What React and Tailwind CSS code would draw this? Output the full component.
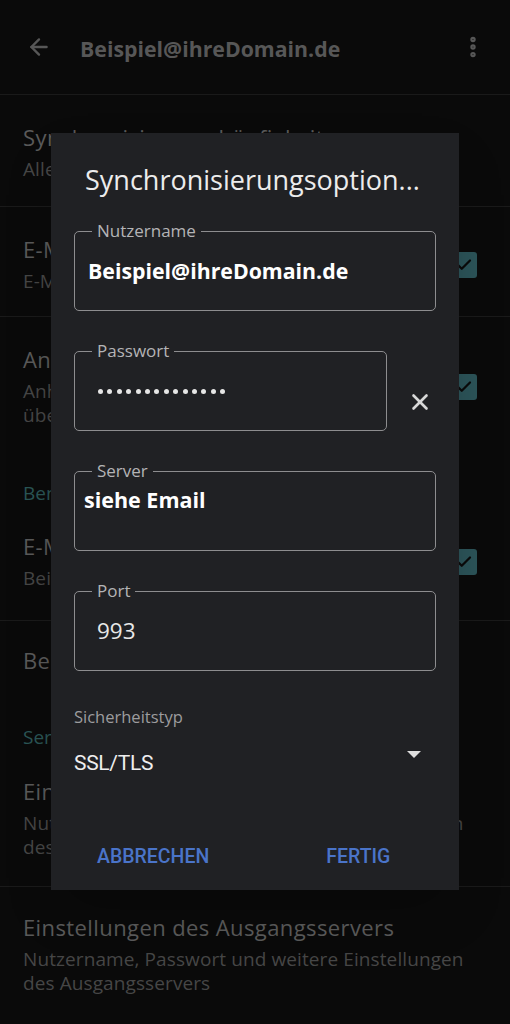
import { ArrowLeft, MoreVertical, X, Check } from 'lucide-react'

const SANS = "font-['Roboto','Liberation_Sans',sans-serif]"
const OPEN = "font-['Open_Sans','Liberation_Sans',sans-serif]"
const GEO = "font-['Open_Sans','DejaVu_Sans',sans-serif]"

function Checkbox() {
  return (
    <div className="w-[26px] h-[26px] rounded-[3px] bg-[#2c5459] flex items-center justify-center flex-shrink-0">
      <Check className="w-[18px] h-[18px] text-[#0a0a0a]" strokeWidth={3} />
    </div>
  )
}

function Item({ title, lines = [], check, className = '', border = true }) {
  return (
    <div className={`flex items-center pl-[23px] pr-[33px] ${OPEN} ${border ? 'border-b border-[#1a1a1a]' : ''} ${className}`}>
      <div className="flex-1 min-w-0">
        <div className="text-[22px] leading-[24px] tracking-[0.4px] text-[#5a5a5a] whitespace-nowrap">{title}</div>
        {lines.length > 0 && (
          <div className="mt-[8px] text-[19px] leading-[24px] tracking-[0.1px] text-[#464646]">
            {lines.map((l) => <div key={l} className="whitespace-nowrap">{l}</div>)}
          </div>
        )}
      </div>
      {check && <Checkbox />}
    </div>
  )
}

function Field({ label, width = 'w-[362px]', children }) {
  return (
    <div className={`relative h-[80px] ${width} rounded-[5px] border-[1.5px] border-[#8d8d8f]`}>
      <span className={`absolute -top-[12px] left-[17px] px-[5px] bg-[#202124] text-[17px] leading-[22px] text-[#b4b4b6] ${OPEN}`}>
        {label}
      </span>
      {children}
    </div>
  )
}

export default function App() {
  return (
    <div className={`relative w-[510px] h-[1024px] overflow-hidden bg-[#0a0a0a] ${SANS}`}>
      {/* Hintergrund: Kontoeinstellungen */}
      <div className="h-[95px] flex items-center border-b border-[#1a1a1a]">
        <ArrowLeft className="ml-[26px] w-[26px] h-[26px] text-[#575757]" strokeWidth={2.2} />
        <span className={`ml-[28px] mt-[3px] text-[21.3px] font-bold text-[#575757] ${GEO}`}>Beispiel@ihreDomain.de</span>
        <MoreVertical className="ml-auto mr-[24px] w-[26px] h-[26px] text-[#575757]" strokeWidth={3} />
      </div>

      <Item className="pt-[30px] pb-[25px]" title="Synchronisierungshäufigkeit" lines={['Alle 15 Minuten']} />
      <Item className="pt-[30px] pb-[23px]" title="E-Mails synchronisieren" lines={['E-Mails von diesem Konto synchronisieren']} check />
      <Item className="pt-[30px] pb-[28px]" border={false} title="Anhänge herunterladen" lines={['Anhänge kürzlich empfangener Nachrichten', 'über WLAN automatisch herunterladen']} check />

      <div className={`pl-[23px] pt-[26px] text-[19px] leading-[24px] text-[#2b5656] ${OPEN}`}>Benachrichtigungseinstellungen</div>
      <Item className="pt-[29px] pb-[30px]" title="E-Mail-Benachrichtigungen" lines={['Bei neuen E-Mails benachrichtigen']} check />
      <Item className="pt-[27px] pb-[38px]" border={false} title="Benachrichtigungen verwalten" />

      <div className={`pl-[23px] pt-[15px] text-[19px] leading-[24px] text-[#2b5656] ${OPEN}`}>Servereinstellungen</div>
      <Item className="pt-[30px] pb-[27px]" title="Einstellungen des Eingangsservers" lines={['Nutzername, Passwort und weitere Einstellungen', 'des Eingangsservers']} />
      <Item className="pt-[28px]" border={false} title="Einstellungen des Ausgangsservers" lines={['Nutzername, Passwort und weitere Einstellungen', 'des Ausgangsservers']} />

      {/* Dialog */}
      <div className="absolute left-[51px] top-[133px] w-[408px] h-[757px] bg-[#202124] shadow-2xl">
        <div className={`pl-[34px] pt-[29px] text-[27px] leading-[36px] text-[#ececec] ${OPEN}`}>Synchronisierungsoption...</div>

        <div className="pl-[23px] pt-[33px] flex flex-col gap-[40px]">
          <Field label="Nutzername">
            <div className={`pl-[13px] pt-[25px] text-[21.3px] leading-[28px] font-bold text-white ${GEO}`}>Beispiel@ihreDomain.de</div>
          </Field>

          <div className="flex items-center">
            <Field label="Passwort" width="w-[313px]">
              <div className="pl-[23px] pt-[37px] flex gap-[4.4px]">
                {Array.from({ length: 14 }).map((_, i) => (
                  <span key={i} className="w-[5px] h-[5px] rounded-full bg-[#e6e6e6]" />
                ))}
              </div>
            </Field>
            <X className="ml-[20px] mt-[22px] w-[26px] h-[26px] text-[#d8d8d8]" strokeWidth={2.4} />
          </div>

          <Field label="Server">
            <div className={`pl-[9px] pt-[14px] text-[21.5px] leading-[28px] font-bold text-white ${GEO}`}>siehe Email</div>
          </Field>

          <Field label="Port">
            <div className={`pl-[22px] pt-[24px] text-[22.5px] leading-[30px] text-[#e8e8e8] ${GEO}`}>993</div>
          </Field>
        </div>

        <div className={`pl-[23px] pt-[35px] text-[16.5px] leading-[22px] text-[#9c9c9e] ${OPEN}`}>Sicherheitstyp</div>
        <div className="pl-[23px] pr-[38px] pt-[22px] flex items-center">
          <span className="text-[21px] leading-[26px] text-[#eeeeee] tracking-[-0.3px]">SSL/TLS</span>
          <svg className="ml-auto -mt-[16px] w-[14px] h-[8px]" viewBox="0 0 14 8">
            <path d="M0 0 L14 0 L7 7 Z" fill="#dedede" />
          </svg>
        </div>

        <div className="flex pl-[46px] pt-[68px] text-[19.5px] leading-[26px] font-medium text-[#4a74c9]">
          <span>ABBRECHEN</span>
          <span className="ml-[117px]">FERTIG</span>
        </div>
      </div>
    </div>
  )
}
